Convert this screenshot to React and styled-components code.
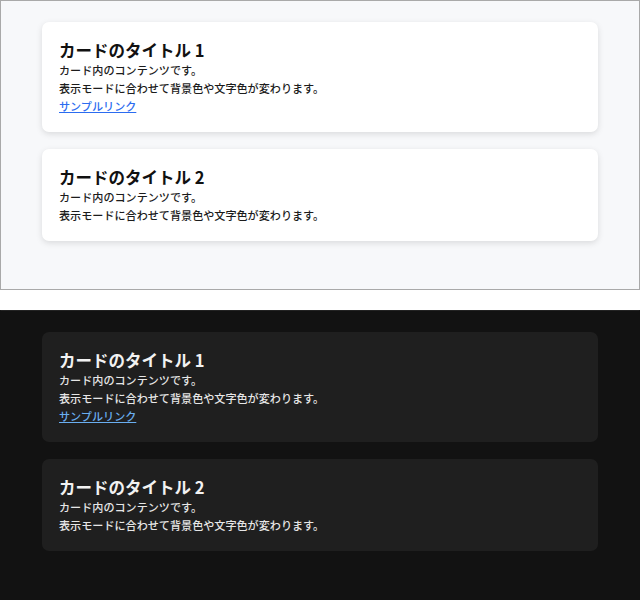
import React from "react"
import styled, { createGlobalStyle } from "styled-components"

const GlobalStyle = createGlobalStyle`
  html, body {
    margin: 0;
    padding: 0;
    background: #ffffff;
  }
  body {
    font-family: "Noto Sans CJK JP", "Noto Sans", sans-serif;
  }
  * {
    box-sizing: border-box;
  }
`

const themes = {
  light: {
    page: "#f7f8fa",
    border: "#a9a9a9",
    side: "#a9a9a9",
    card: "#ffffff",
    shadow: "0 2px 6px rgba(0, 0, 0, 0.12)",
    title: "#111111",
    text: "#1c1c1c",
    link: "#2b6cf0",
  },
  dark: {
    page: "#121212",
    border: "#232323",
    side: "#121212",
    card: "#1f1f1f",
    shadow: "none",
    title: "#f2f2f2",
    text: "#e6e6e6",
    link: "#6aaef0",
  },
}

const Section = styled.section`
  height: 290px;
  margin-bottom: 20px;
  padding: 21px 41px;
  background: ${(p) => p.$theme.page};
  border: 1px solid ${(p) => p.$theme.side};
  border-top-color: ${(p) => p.$theme.border};
  display: flex;
  flex-direction: column;
  gap: 17px;
`

const Card = styled.article`
  background: ${(p) => p.$theme.card};
  border-radius: 7px;
  box-shadow: ${(p) => p.$theme.shadow};
  padding: 17px 17px;
`

const Title = styled.h2`
  margin: 0;
  font-size: 16.5px;
  line-height: 22px;
  font-weight: 700;
  color: ${(p) => p.$theme.title};
`

const Text = styled.p`
  margin: 0;
  font-size: 11.1px;
  line-height: 18px;
  font-weight: 500;
  color: ${(p) => p.$theme.text};
`

const Link = styled.a`
  display: block;
  font-size: 11.1px;
  line-height: 18px;
  font-weight: 500;
  color: ${(p) => p.$theme.link};
  text-decoration: underline;
`

const cards = [
  { title: "カードのタイトル 1", link: true },
  { title: "カードのタイトル 2", link: false },
]

const Panel = ({ mode }) => {
  const theme = themes[mode]
  return (
    <Section $theme={theme}>
      {cards.map((c) => (
        <Card key={c.title} $theme={theme}>
          <Title $theme={theme}>{c.title}</Title>
          <Text $theme={theme}>カード内のコンテンツです。</Text>
          <Text $theme={theme}>表示モードに合わせて背景色や文字色が変わります。</Text>
          {c.link && (
            <Link $theme={theme} href="#">
              サンプルリンク
            </Link>
          )}
        </Card>
      ))}
    </Section>
  )
}

const App = () => (
  <>
    <GlobalStyle />
    <Panel mode="light" />
    <Panel mode="dark" />
  </>
)

export default App
